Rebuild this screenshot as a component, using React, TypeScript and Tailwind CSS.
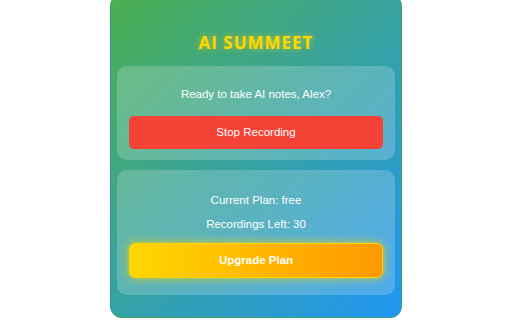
import React from 'react';

export default function App() {
  return (
    <div className="w-[512px] h-[320px] bg-white flex justify-center overflow-hidden">
      <div
        className="w-[292px] h-[324px] -mt-[6px] rounded-xl border border-[#3a9e5a]/40 bg-[linear-gradient(135deg,#4caf50,#2196f3)] px-[6px] flex flex-col"
        style={{ fontFamily: '"Liberation Sans", Arial, sans-serif' }}
      >
        <h1
          className="mt-[37px] h-[22px] text-center text-[17px] leading-[22px] font-bold tracking-[1px] text-[#ffd700] [text-shadow:0_0_6px_rgba(255,215,0,0.7)]"
          style={{ fontFamily: '"Open Sans", "Liberation Sans", sans-serif' }}
        >
          AI SUMMEET
        </h1>

        <div className="mt-[12px] rounded-[10px] bg-white/20 px-[12px] pt-[20px] pb-[11px] flex flex-col">
          <p className="text-center text-[11.5px] leading-[16px] text-white">
            Ready to take AI notes, Alex?
          </p>
          <button className="mt-[14px] h-[33px] rounded-[5px] bg-[#f44336] text-white text-[11.5px]">
            Stop Recording
          </button>
        </div>

        <div className="mt-[10px] rounded-[10px] bg-white/20 px-[12px] pt-[22px] pb-[17px] flex flex-col">
          <p className="text-center text-[11.5px] leading-[16px] text-white">Current Plan: free</p>
          <p className="mt-[8px] text-center text-[11.5px] leading-[16px] text-white">Recordings Left: 30</p>
          <button className="mt-[11px] h-[35px] rounded-[6px] border border-[#ffd700] bg-[linear-gradient(90deg,#ffd700,#ff9800)] text-white text-[11.5px] font-bold shadow-[0_0_10px_rgba(255,215,0,0.8)]">
            Upgrade Plan
          </button>
        </div>
      </div>
    </div>
  );
}
